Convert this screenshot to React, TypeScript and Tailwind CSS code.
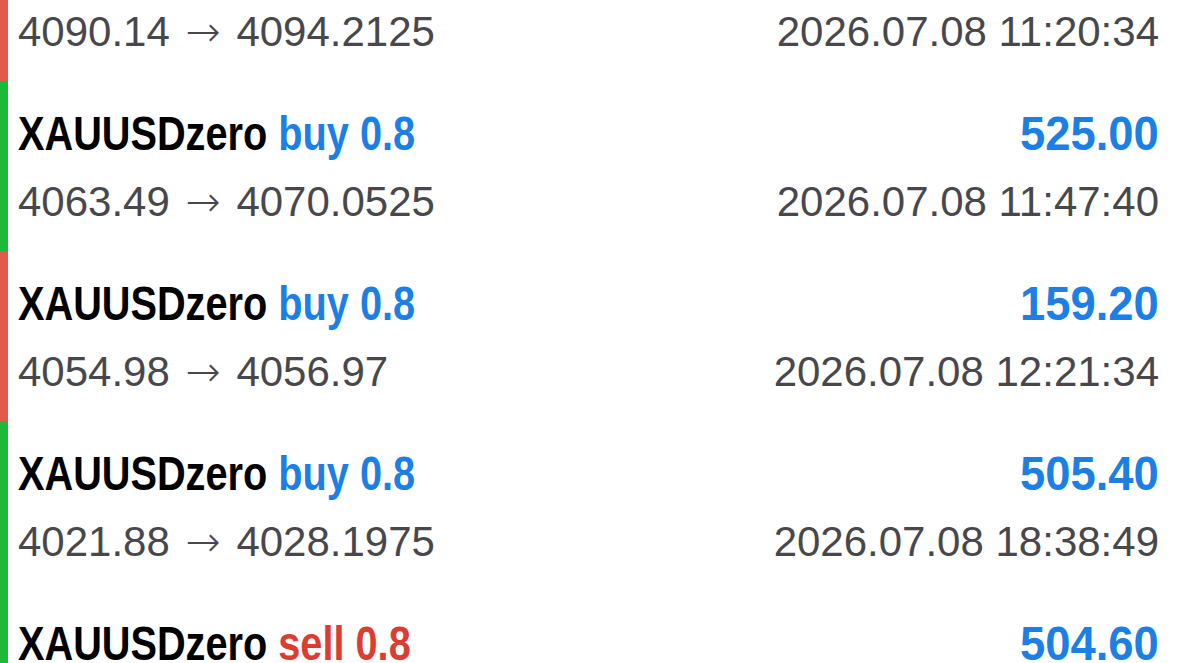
import React from "react";

type Deal = {
  symbol: string;
  side: "buy" | "sell";
  volume: string;
  profit: string;
  open: string;
  close: string;
  time: string;
  bar: "red" | "green";
};

const DEALS: Deal[] = [
  { symbol: "XAUUSDzero", side: "buy", volume: "0.8", profit: "0.00", open: "4090.14", close: "4094.2125", time: "2026.07.08 11:20:34", bar: "red" },
  { symbol: "XAUUSDzero", side: "buy", volume: "0.8", profit: "525.00", open: "4063.49", close: "4070.0525", time: "2026.07.08 11:47:40", bar: "green" },
  { symbol: "XAUUSDzero", side: "buy", volume: "0.8", profit: "159.20", open: "4054.98", close: "4056.97", time: "2026.07.08 12:21:34", bar: "red" },
  { symbol: "XAUUSDzero", side: "buy", volume: "0.8", profit: "505.40", open: "4021.88", close: "4028.1975", time: "2026.07.08 18:38:49", bar: "green" },
  { symbol: "XAUUSDzero", side: "sell", volume: "0.8", profit: "504.60", open: "4019.52", close: "4013.2125", time: "2026.07.08 19:02:11", bar: "green" },
];

function DealRow({ deal }: { deal: Deal }) {
  return (
    <li className="flex h-[170px] bg-white">
      <div className={deal.bar === "red" ? "w-2 bg-[#e05a50]" : "w-2 bg-[#1cb93a]"} />
      <div className="flex-1 pl-[10px] pr-5 pt-[27px]">
        {/* no condensed face installed, so squeeze the bold line horizontally */}
        <div className="flex justify-between text-[48px] leading-[52px] font-bold font-['Liberation_Sans',Arial,sans-serif]">
          <span className="inline-block origin-left scale-x-[0.827] text-black whitespace-nowrap">
            {deal.symbol}{" "}
            <span className={deal.side === "buy" ? "text-[#1b7fe6]" : "text-[#dc3d31]"}>
              {deal.side} {deal.volume}
            </span>
          </span>
          <span className="inline-block origin-right scale-x-[0.945] text-[#1b7fe6]">{deal.profit}</span>
        </div>
        <div className="mt-[18px] flex justify-between text-[42px] leading-[48px] text-[#48484c] font-['Liberation_Sans',Arial,sans-serif]">
          <span>
            {deal.open} <span className="mx-1 font-['DejaVu_Sans'] font-light">→</span> {deal.close}
          </span>
          <span>{deal.time}</span>
        </div>
      </div>
    </li>
  );
}

export default function App() {
  return (
    <div className="h-[663px] w-[1179px] overflow-hidden bg-white">
      <ul className="-mt-[89px]">
        {DEALS.map((deal, i) => (
          <DealRow key={i} deal={deal} />
        ))}
      </ul>
    </div>
  );
}
